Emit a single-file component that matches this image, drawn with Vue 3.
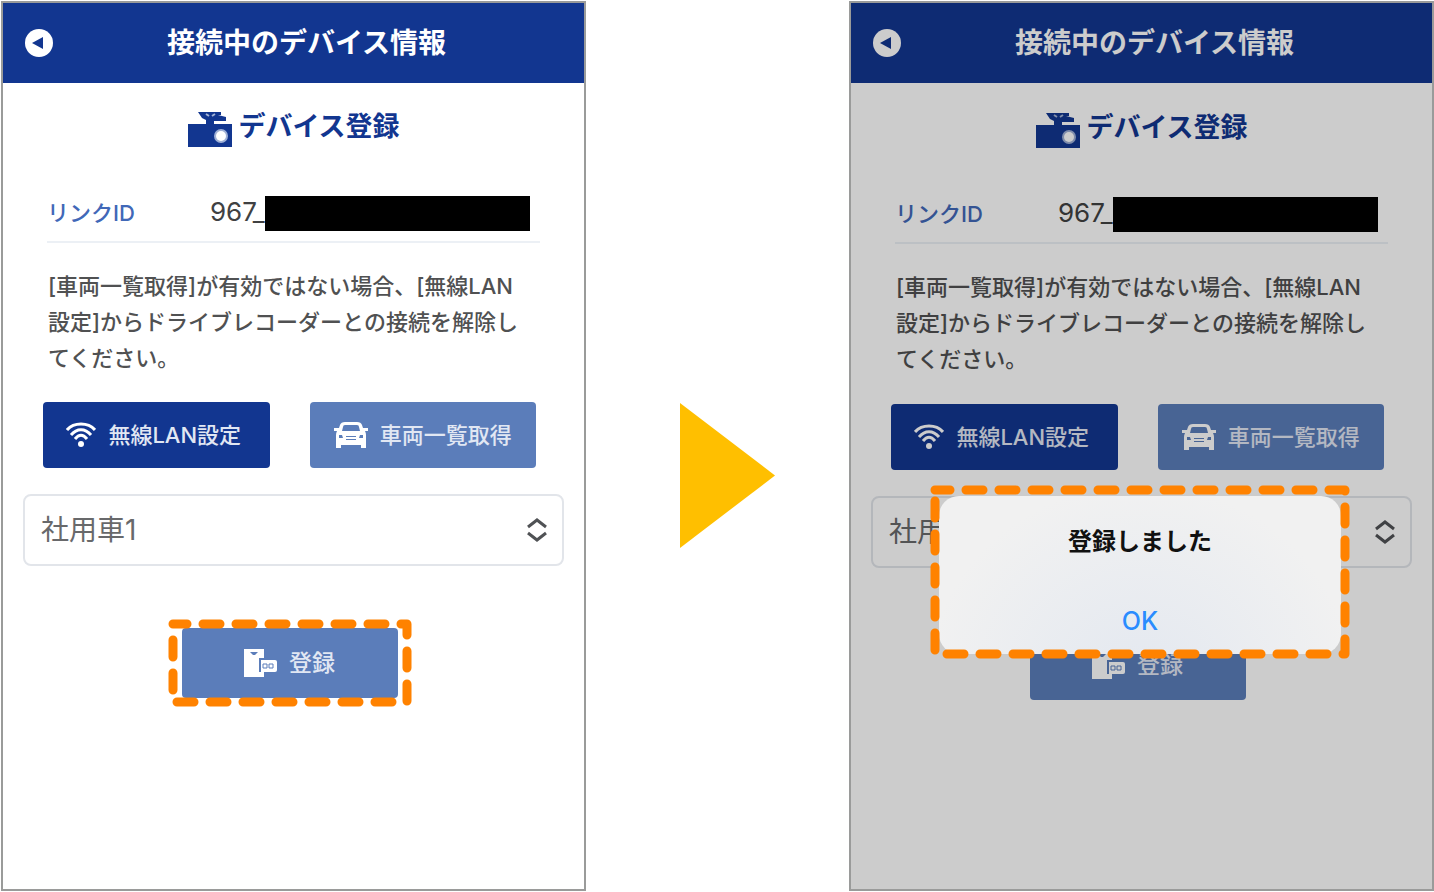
<template>
  <main class="flow">
    <section
      v-for="(screen, index) in screens"
      :key="screen.id"
      class="phone"
      :class="{ second: index === 1 }"
    >
      <header class="bar">
        <button class="back" type="button" aria-label="戻る">
          <svg viewBox="0 0 28 28" aria-hidden="true">
            <circle cx="14" cy="14" r="14" fill="#fff" />
            <path d="M7 14 L18 8 V20 Z" fill="#123690" />
          </svg>
        </button>
        <h1>接続中のデバイス情報</h1>
      </header>

      <div class="content">
        <h2 class="device-title">
          <svg class="camera" viewBox="0 0 46 38" aria-hidden="true">
            <path
              d="M1 13 H19 V9 L15 7 L11 1 H34 V4 H31 L39 6 V10 H27 V13 H45 V36 H1 Z"
              fill="#123690"
            />
            <path d="M19 3 L22 5 M25 5 L28 3" stroke="#a3b3d6" stroke-width="2" />
            <circle cx="34" cy="25" r="7" fill="#9fb0d6" />
            <circle cx="34" cy="25" r="5" fill="#fff" />
          </svg>
          デバイス登録
        </h2>

        <dl class="link-row">
          <dt>リンクID</dt>
          <dd>967_<span class="mask"></span></dd>
        </dl>

        <p class="note">
          [車両一覧取得]が有効ではない場合、[無線LAN設定]からドライブレコーダーとの接続を解除してください。
        </p>

        <div class="actions">
          <button class="btn btn-wifi" type="button">
            <svg class="icon-wifi" viewBox="0 0 30 26" aria-hidden="true">
              <g fill="none" stroke="#fff" stroke-width="3">
                <path d="M1 8 C8 0 22 0 29 8" />
                <path d="M5 13 C11 6 19 6 25 13" />
                <path d="M9 17 C13 12 17 12 21 17" />
              </g>
              <circle cx="15" cy="22" r="3" fill="#fff" />
            </svg>
            無線LAN設定
          </button>
          <button class="btn btn-light" type="button">
            <svg class="icon-car" viewBox="0 0 34 26" aria-hidden="true">
              <path
                fill="#fff"
                fill-rule="evenodd"
                d="M11 0 H23 Q27 0 28 3 L29 6 H34 V9 H31 Q32 11 32 13 V26 H27 V23 H7 V26 H2 V13 Q2 11 3 9 H0 V6 H5 L6 3 Q7 0 11 0 Z M11 3 Q9 3 9 5 L8 9 H26 L25 5 Q25 3 23 3 Z M5 13 V16 H9 L8 13 Z M29 13 V16 H25 L26 13 Z M12 14 V15 H22 V14 Z M12 17 V18 H22 V17 Z"
              />
            </svg>
            車両一覧取得
          </button>
        </div>

        <div class="vehicle">
          <select v-model="screen.vehicle" aria-label="車両">
            <option value="社用車1">社用車1</option>
          </select>
          <svg class="chevrons" viewBox="0 0 20 24" aria-hidden="true">
            <path
              d="M1 9 L10 2 L19 9 M1 15 L10 22 L19 15"
              fill="none"
              stroke="#505255"
              stroke-width="3"
            />
          </svg>
        </div>

        <div class="submit">
          <div class="submit-box">
            <button class="btn btn-light btn-register" type="button">
              <svg class="icon-register" viewBox="0 0 34 30" aria-hidden="true">
                <path d="M1 1 H21 V10 H16 V24 H21 V29 H1 Z" fill="#fff" />
                <path d="M7 4 H15 L12 7 H10 Z" fill="#5b7dba" />
                <path d="M18 12 H32 Q34 12 34 14 V22 Q34 24 32 24 H18 Z" fill="#fff" />
                <path
                  d="M20 16 H24 V20 H20 Z M26 16 H30 V20 H26 Z"
                  fill="none"
                  stroke="#5b7dba"
                  stroke-width="1"
                />
              </svg>
              登録
            </button>
            <svg v-if="!screen.done" class="dash dash-submit" aria-hidden="true">
              <rect width="100%" height="100%" stroke-dashoffset="3" />
            </svg>
          </div>
        </div>
      </div>

      <div v-if="screen.done" class="backdrop">
        <div class="dialog" role="alertdialog" aria-labelledby="done-title">
          <h3 id="done-title">登録しました</h3>
          <button class="ok" type="button">OK</button>
          <svg class="dash dash-dialog" aria-hidden="true">
            <rect width="100%" height="100%" stroke-dashoffset="2" />
          </svg>
        </div>
      </div>
    </section>

    <svg class="arrow" viewBox="0 0 95 145" aria-hidden="true">
      <path d="M0 0 L95 72.5 L0 145 Z" fill="#ffbf00" />
    </svg>
  </main>
</template>

<script setup>
import { reactive } from 'vue';

// 登録前と登録完了後の画面
const screens = reactive([
  { id: 'before', vehicle: '社用車1', done: false },
  { id: 'after', vehicle: '社用車1', done: true }
]);
</script>

<style>
body {
  margin: 0;
  background: #fff;
}
</style>

<style scoped>
.flow {
  display: grid;
  grid-template-columns: 585fr 263fr 585fr;
  align-items: center;
  box-sizing: border-box;
  min-height: 100vh;
  padding: 1px 0 1px 1px;
  font-family: Inter, "Noto Sans CJK JP", sans-serif;
}

.phone {
  position: relative;
  grid-column: 1;
  grid-row: 1;
  align-self: stretch;
  border: 2px solid #9a9b9a;
  background: #fff;
}

.phone.second {
  grid-column: 3;
}

.arrow {
  grid-column: 2;
  grid-row: 1;
  justify-self: center;
  width: 95px;
  height: 145px;
  margin: 58px 0 0 20px;
}

h1,
h2,
h3,
p,
dl,
dd {
  margin: 0;
}

button,
select {
  font-family: inherit;
  cursor: pointer;
}

.bar {
  display: flex;
  align-items: center;
  height: 80px;
  padding: 0 24px 0 22px;
  background: #123690;
}

.back {
  display: flex;
  padding: 0;
  border: none;
  background: none;
}

.back svg {
  width: 28px;
  height: 28px;
}

.bar h1 {
  flex: 1;
  color: #fff;
  font-size: 28px;
  font-weight: 700;
  line-height: 40px;
  text-align: center;
}

.content {
  padding: 28px 20px 0;
}

.second .content {
  padding-top: 29px;
}

.device-title {
  display: flex;
  justify-content: center;
  gap: 5px;
  color: #123690;
  font-size: 27px;
  font-weight: 700;
  line-height: 32px;
}

.camera {
  width: 46px;
  height: 38px;
}

.link-row {
  display: flex;
  align-items: center;
  margin: 47px 24px 0;
  padding-bottom: 10px;
  border-bottom: 2px solid #ecf0f5;
}

.link-row dt {
  width: 163px;
  color: #4168b8;
  font-size: 22px;
  font-weight: 500;
  line-height: 35px;
}

.link-row dd {
  display: flex;
  flex: 1;
  color: #404142;
  font-size: 26px;
  line-height: 32px;
}

.mask {
  width: 265px;
  height: 35px;
  background: #000;
}

.note {
  margin: 25px 34px 0 25px;
  color: #505152;
  font-size: 22px;
  font-weight: 500;
  line-height: 36px;
}

.actions {
  display: grid;
  grid-template-columns: 1fr 1fr;
  gap: 40px;
  margin: 26px 28px 0 20px;
}

.second .actions {
  margin-top: 27px;
}

.btn {
  display: flex;
  align-items: center;
  justify-content: center;
  height: 66px;
  padding: 0;
  border: none;
  border-radius: 4px;
  color: #e1e7f3;
  font-size: 22px;
  font-weight: 500;
  line-height: 32px;
}

.btn-wifi {
  gap: 12px;
  padding-right: 5px;
  background: #123690;
}

.btn-light {
  gap: 12px;
  background: #5b7dba;
}

.icon-wifi {
  width: 30px;
  height: 26px;
}

.icon-car {
  width: 34px;
  height: 26px;
}

.vehicle {
  position: relative;
  margin-top: 26px;
}

.vehicle select {
  display: block;
  width: 100%;
  height: 72px;
  padding: 0 52px 0 16px;
  border: 2px solid #e2e5ea;
  border-radius: 8px;
  appearance: none;
  background: transparent;
  color: #68696b;
  font-size: 28px;
}

.chevrons {
  position: absolute;
  top: 24px;
  right: 17px;
  width: 20px;
  height: 24px;
  pointer-events: none;
}

.submit {
  display: flex;
  justify-content: center;
  margin-top: 62px;
  padding-right: 7px;
}

.submit-box {
  position: relative;
}

.btn-register {
  width: 216px;
  height: 70px;
  padding-right: 2px;
  font-size: 23px;
}

.icon-register {
  width: 34px;
  height: 30px;
}

.dash {
  position: absolute;
  overflow: visible;
  pointer-events: none;
}

.dash rect {
  fill: none;
  stroke: #ff8200;
  stroke-width: 9px;
  stroke-dasharray: 17 16;
  stroke-linecap: round;
  stroke-linejoin: round;
}

.dash-submit {
  top: -4px;
  left: -9px;
  width: calc(100% + 18px);
  height: calc(100% + 8px);
}

.dash-dialog {
  top: -6px;
  left: -4px;
  width: calc(100% + 8px);
  height: calc(100% + 6px);
}

.backdrop {
  position: absolute;
  inset: 0;
  display: flex;
  align-items: flex-start;
  justify-content: center;
  padding: 493px 3px 0 0;
  background: rgba(0, 0, 0, 0.2);
}

.dialog {
  position: relative;
  display: flex;
  flex-direction: column;
  align-items: center;
  gap: 43px;
  box-sizing: border-box;
  width: 402px;
  height: 158px;
  padding-top: 28px;
  border-radius: 20px;
  background: radial-gradient(ellipse at 50% 120%, #e3e8f0 0%, #f1f1f1 75%);
}

.dialog h3 {
  color: #111;
  font-size: 24px;
  font-weight: 700;
  line-height: 36px;
}

.ok {
  padding: 0;
  border: none;
  background: none;
  color: #2a8cff;
  font-size: 25px;
  font-weight: 500;
  line-height: 36px;
}
</style>
